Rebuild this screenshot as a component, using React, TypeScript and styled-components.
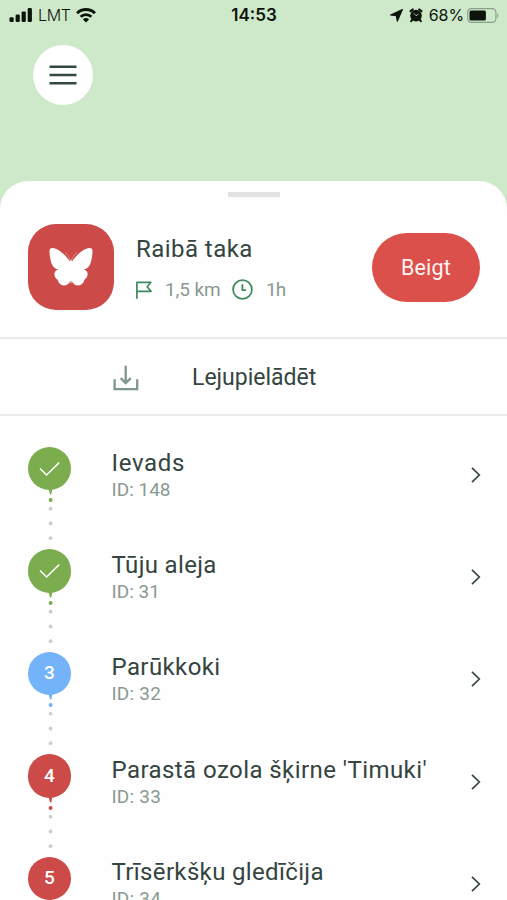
import React from "react";
import styled, { createGlobalStyle } from "styled-components";

const GlobalStyle = createGlobalStyle`
  *, *::before, *::after { box-sizing: border-box; }
  body {
    margin: 0;
    background: #cee9ca;
    font-family: Roboto, "Liberation Sans", sans-serif;
    color: #34443f;
  }
  svg { display: block; flex: none; overflow: visible; }
`;

const Screen = styled.div`
  width: 100%;
  height: 900px;
  overflow: hidden;
  display: flex;
  flex-direction: column;
  background: #cee9ca;
`;

const StatusBar = styled.header`
  height: 30px;
  flex: none;
  display: grid;
  grid-template-columns: 1fr auto 1fr;
  align-items: center;
  padding: 0 8px 0 9px;
  font-family: Inter, sans-serif;
  font-size: 16px;
  line-height: 29px;
  color: #0c140c;
`;

const StatusGroup = styled.div<{ $end?: boolean }>`
  display: flex;
  align-items: center;
  gap: ${(p) => (p.$end ? 6 : 5)}px;
  justify-content: ${(p) => (p.$end ? "flex-end" : "flex-start")};
`;

const StatusText = styled.span<{ $light?: boolean; $tracking?: number }>`
  font-weight: ${(p) => (p.$light ? 300 : 400)};
  letter-spacing: ${(p) => p.$tracking ?? 0}px;
`;

const BatteryLevel = styled.div`
  display: flex;
  align-items: center;
  gap: 3px;
`;

const Clock = styled.time`
  font-size: 17px;
  font-weight: 600;
`;

const MapArea = styled.div`
  height: 150.5px;
  flex: none;
  padding: 15px 33px;
`;

const MenuButton = styled.button`
  width: 60px;
  height: 60px;
  padding: 0;
  border: 0;
  border-radius: 50%;
  background: #fff;
  display: grid;
  place-items: center;
`;

const Sheet = styled.main`
  flex: 1;
  min-height: 0;
  overflow: hidden;
  background: #fdfefd;
  border-radius: 28px 28px 0 0;
`;

const Handle = styled.div`
  width: 52px;
  height: 5px;
  margin: 11.5px auto 0;
  background: #e3e3e3;
`;

const TrailHeader = styled.section`
  height: 142px;
  display: flex;
  align-items: center;
  padding: 0 27px 0 28px;
  border-bottom: 2px solid #ebebeb;
`;

const TrailBadge = styled.div`
  width: 86px;
  height: 86px;
  border-radius: 28px;
  background: #cc4a48;
  display: grid;
  place-items: center;
  flex: none;
`;

const TrailInfo = styled.div`
  flex: 1;
  margin-left: 22px;
  display: flex;
  flex-direction: column;
  gap: 14px;
  padding-top: 1px;
`;

const Title = styled.h2<{ $tracking: number }>`
  margin: 0;
  font-size: 24px;
  line-height: 30px;
  font-weight: 400;
  white-space: nowrap;
  letter-spacing: ${(p) => p.$tracking}px;
`;

const Meta = styled.div`
  display: flex;
  align-items: center;
  height: 24px;
`;

const MetaText = styled.span<{ $tracking?: number; $width?: number }>`
  font-size: 19px;
  line-height: 24px;
  color: #8b9993;
  white-space: nowrap;
  letter-spacing: ${(p) => p.$tracking ?? 0}px;
  width: ${(p) => (p.$width ? `${p.$width}px` : "auto")};
  margin-left: 13px;
`;

const EndButton = styled.button`
  width: 108px;
  height: 69px;
  padding: 1px 0 0;
  border: 0;
  border-radius: 35px;
  background: #dc504c;
  color: #fff4f2;
  font: 400 21.5px/26px Roboto, sans-serif;
  letter-spacing: 0.2px;
`;

const DownloadBar = styled.button`
  width: 100%;
  height: 77px;
  padding: 3px 0 0 113px;
  border: 0;
  border-bottom: 2px solid #ebebeb;
  background: transparent;
  display: flex;
  align-items: center;
  gap: 53px;
  color: #34443f;
  font: 400 23px/30px Roboto, sans-serif;
`;

const StopList = styled.ol`
  list-style: none;
  margin: 0;
  padding: 31px 0 0;
`;

const Stop = styled.li`
  height: 102.4px;
  display: flex;
  align-items: flex-start;
  padding: 0 26px 0 27.5px;
`;

const MarkerColumn = styled.div`
  width: 44px;
  margin-right: 40px;
  display: flex;
  flex-direction: column;
  align-items: center;
`;

const Marker = styled.div<{ $color: string }>`
  width: 43.4px;
  height: 43.4px;
  border-radius: 50%;
  background: ${(p) => p.$color};
  color: #fff;
  display: grid;
  place-items: center;
  font: 500 19px/24px Roboto, sans-serif;
`;

const StopText = styled.div`
  flex: 1;
  padding-top: 0.6px;
`;

const StopId = styled.div<{ $tracking: number }>`
  font-size: 19px;
  line-height: 24px;
  color: #8b9993;
  letter-spacing: ${(p) => p.$tracking}px;
`;

const ChevronSlot = styled.div`
  padding-top: 19.7px;
`;

const Signal = () => (
  <svg width="24" height="14" viewBox="0 0 24 14" fill="currentColor">
    <rect x="0.5" y="9.3" width="4.2" height="4.7" rx="1.2" />
    <rect x="6.6" y="6.6" width="4.2" height="7.4" rx="1.2" />
    <rect x="12.6" y="3.4" width="4.2" height="10.6" rx="1.2" />
    <rect x="18.7" y="0" width="4.2" height="14" rx="1.2" />
  </svg>
);

const Wifi = () => (
  <svg width="20" height="15" viewBox="0 0 20 15" fill="none" stroke="currentColor">
    <path d="M1.1 5.2a12.6 12.6 0 0 1 17.8 0" strokeWidth="3" />
    <path d="M4.6 8.8a7.7 7.7 0 0 1 10.8 0" strokeWidth="2.6" />
    <path d="M10 14.6 6.9 11.5a4.5 4.5 0 0 1 6.2 0z" fill="currentColor" stroke="none" />
  </svg>
);

const LocationArrow = () => (
  <svg width="13" height="13" viewBox="0 0 13 13" fill="currentColor">
    <path d="M12.4.6 7.3 12.2 6.3 6.7.6 6z" stroke="currentColor" strokeWidth="1.1" strokeLinejoin="round" />
  </svg>
);

const Alarm = () => (
  <svg width="14" height="14" viewBox="0 0 14 14" fill="none" strokeLinecap="round">
    <circle cx="7" cy="7.6" r="5.8" fill="currentColor" />
    <path d="M1.6 3.2 3.7 1.5M12.4 3.2 10.3 1.5M3 12l-.8 1.2M11 12l.8 1.2" stroke="currentColor" strokeWidth="2.2" />
    <path d="M5 5.600 7 7.700l2-1.300" stroke="#cee9ca" strokeWidth=".8" />
  </svg>
);

const Battery = () => (
  <svg width="32" height="15" viewBox="0 0 32 15">
    <rect x=".7" y=".7" width="28.2" height="13.6" rx="3.6" fill="none" stroke="#8ba18a" strokeWidth="1.2" />
    <rect x="2.5" y="2.5" width="16.4" height="10" rx="1.6" fill="#0c140c" />
    <path d="M30.2 5.2c1.6.8 1.6 3.8 0 4.6z" fill="#8ba18a" />
  </svg>
);

const MenuIcon = () => (
  <svg width="28" height="20" viewBox="0 0 28 20" stroke="#354943" strokeWidth="2.4">
    <path d="M.5 1.8h27M.5 10h27M.5 18.2h27" />
  </svg>
);

const Butterfly = () => (
  <svg width="44" height="40" viewBox="0 0 44 40" fill="#fff">
    <path d="M21 14.500C17 8.500 9.500 1.400 3.500 1.100 1.400 1 .5 2.200.5 4 .6 8.500 1.200 12.500 2.400 16c1.100 3.400 3.200 5.800 6.800 6.600-2.600.9-4 2.300-3.800 4.900.3 2.400 1.500 3.900 3.200 5.300.8 3.500 3 5.600 6 5.600 3.400 0 5.700-1.800 6.700-5 .1 1.500.3 3 .7 3s.6-1.500.7-3c1 3.200 3.300 5 6.700 5 3 0 5.200-2.100 6-5.600 1.700-1.400 2.900-2.900 3.200-5.300.2-2.600-1.200-4-3.800-4.900 3.600-.8 5.700-3.200 6.800-6.600 1.200-3.500 1.800-7.500 1.900-12 0-1.800-.9-3-3-2.900C34.500 1.400 27 8.500 23 14.500c-.4-2.200-1.600-2.200-2 0z" />
    <path d="M21.500 13.500C20.500 10 18.500 7.300 16 5.500M22.500 13.500C23.500 10 25.500 7.300 28 5.500" fill="none" stroke="#e9aca9" strokeWidth=".6" />
  </svg>
);

const Flag = () => (
  <svg width="16" height="18" viewBox="0 0 16 18" fill="none" stroke="#43895f" strokeWidth="1.7">
    <path d="M.9 17.800V1.300h14L11.200 5.700 15 10.400H1" strokeLinejoin="round" />
  </svg>
);

const ClockIcon = () => (
  <svg width="21" height="21" viewBox="0 0 21 21" fill="none" stroke="#43895f" strokeWidth="1.8">
    <circle cx="10.500" cy="10.500" r="9.400" />
    <path d="M10.400 5.200v5.900h3.600" />
  </svg>
);

const DownloadIcon = () => (
  <svg width="26" height="26" viewBox="0 0 26 26" fill="none" stroke="#7f978c" strokeWidth="2.300">
    <path d="M1.600 14.200v9.900h22.600v-9.900M12.700.8v17M7.700 13.100l5 5 5-5" />
  </svg>
);

const Check = () => (
  <svg width="21" height="14" viewBox="0 0 21 14" fill="none" stroke="#fff" strokeWidth="1.500">
    <path d="M1 6.500 7.600 13 20.200.600" />
  </svg>
);

const Trail = ({ color }: { color: string }) => (
  <svg width="6" height="59" viewBox="0 0 6 59">
    <path d="M1.600-1h3.700L4.300 4.500H3z" fill={color} />
    <circle cx="3.600" cy="10" r="2" fill={color} />
    <g fill="#cbcfcd">
      <circle cx="3.600" cy="18.700" r="1.900" />
      <circle cx="3.600" cy="33.500" r="1.900" />
      <circle cx="3.600" cy="48.200" r="1.900" />
    </g>
  </svg>
);

const Chevron = () => (
  <svg width="10" height="16" viewBox="0 0 10 16" fill="none" stroke="#3a4643" strokeWidth="1.700">
    <path d="M1 .900 8.300 8 1 15.100" />
  </svg>
);

const GREEN = "#7bac4d";
const BLUE = "#74b3fa";
const RED = "#cc4a48";

const stops = [
  { name: "Ievads", id: 148, color: GREEN, done: true, tracking: 0.65, idTracking: 0 },
  { name: "Tūju aleja", id: 31, color: GREEN, done: true, tracking: 0.35, idTracking: 0 },
  { name: "Parūkkoki", id: 32, color: BLUE, done: false, tracking: 0.4, idTracking: 0.2 },
  { name: "Parastā ozola šķirne 'Timuki'", id: 33, color: RED, done: false, tracking: 0.43, idTracking: 0.2 },
  { name: "Trīsērkšķu gledīčija", id: 34, color: RED, done: false, tracking: 0.35, idTracking: 0.2 },
];

export default function App() {
  return (
    <>
      <GlobalStyle />
      <Screen>
        <StatusBar>
          <StatusGroup>
            <Signal />
            <StatusText $light $tracking={-0.3}>LMT</StatusText>
            <Wifi />
          </StatusGroup>
          <Clock>14:53</Clock>
          <StatusGroup $end>
            <LocationArrow />
            <Alarm />
            <BatteryLevel>
              <StatusText $tracking={-0.1}>68%</StatusText>
              <Battery />
            </BatteryLevel>
          </StatusGroup>
        </StatusBar>
        <MapArea>
          <MenuButton aria-label="Menu">
            <MenuIcon />
          </MenuButton>
        </MapArea>
        <Sheet>
          <Handle />
          <TrailHeader>
            <TrailBadge>
              <Butterfly />
            </TrailBadge>
            <TrailInfo>
              <Title $tracking={0.45}>Raibā taka</Title>
              <Meta>
                <Flag />
                <MetaText $tracking={-0.1} $width={67}>1,5 km</MetaText>
                <ClockIcon />
                <MetaText $tracking={-1}>1h</MetaText>
              </Meta>
            </TrailInfo>
            <EndButton>Beigt</EndButton>
          </TrailHeader>
          <DownloadBar>
            <DownloadIcon />
            Lejupielādēt
          </DownloadBar>
          <StopList>
            {stops.map((s, i) => (
              <Stop key={s.id}>
                <MarkerColumn>
                  <Marker $color={s.color}>{s.done ? <Check /> : i + 1}</Marker>
                  <Trail color={s.color} />
                </MarkerColumn>
                <StopText>
                  <Title as="h3" $tracking={s.tracking}>{s.name}</Title>
                  <StopId $tracking={s.idTracking}>ID: {s.id}</StopId>
                </StopText>
                <ChevronSlot>
                  <Chevron />
                </ChevronSlot>
              </Stop>
            ))}
          </StopList>
        </Sheet>
      </Screen>
    </>
  );
}
